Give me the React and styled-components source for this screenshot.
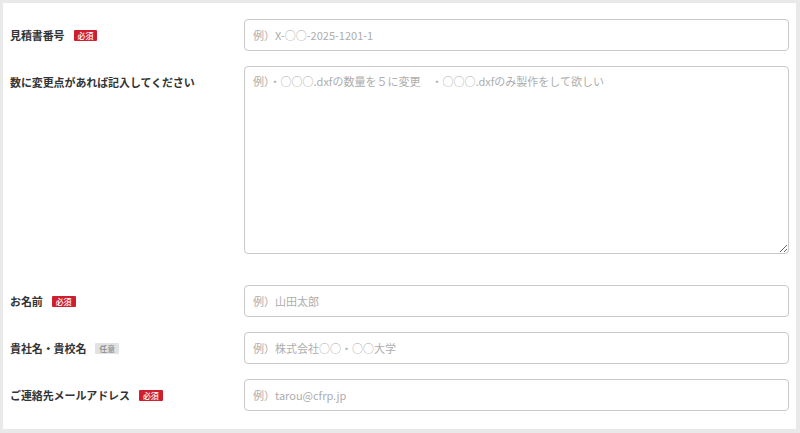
import React from "react";
import styled, { createGlobalStyle } from "styled-components";

const Global = createGlobalStyle`
  html, body { margin: 0; padding: 0; background: #e9e9e9; }
  body { font-family: "Noto Sans CJK JP", "Noto Sans", sans-serif; }
  * { box-sizing: border-box; }
`;

const Page = styled.div`
  padding: 3px 4px 4px 3px;
  width: 800px;
  height: 433px;
`;

const Panel = styled.form`
  background: #fff;
  width: 793px;
  height: 426px;
  padding: 16px 7px 0 7px;
  display: flex;
  flex-direction: column;
`;

const Row = styled.div`
  display: grid;
  grid-template-columns: 234px 1fr;
  align-items: start;
  margin-bottom: ${(p) => p.$gap || 15}px;
`;

const Label = styled.label`
  display: flex;
  align-items: center;
  gap: 9px;
  padding-top: 8px;
  line-height: 16px;
  font-size: 11px;
  font-weight: 700;
  color: #333;
  letter-spacing: -0.1px;
`;

const Badge = styled.span`
  display: inline-block;
  height: 11px;
  line-height: 11px;
  padding: 0 4px;
  font-size: 8px;
  font-weight: 500;
  color: ${(p) => (p.$optional ? "#8a8a8a" : "#fff")};
  background: ${(p) => (p.$optional ? "#e2e2e2" : "#cf1f2e")};
  border-radius: 1px;
`;

const fieldBase = `
  display: block;
  width: 545px;
  margin: 0;
  border: 1px solid #c9c9c9;
  border-radius: 4px;
  background: #fff;
  font-family: "Noto Sans CJK JP", "Noto Sans", sans-serif;
  font-size: 11px;
  color: #333;
  outline: none;
  &::placeholder { color: #adadad; }
`;

const Input = styled.input`
  ${fieldBase}
  height: 32px;
  padding: 0 8px;
`;

const TextArea = styled.textarea`
  ${fieldBase}
  height: 188px;
  padding: 6px 8px;
  line-height: 16px;
  resize: vertical;
`;

const fields = [
  { label: "見積書番号", badge: "必須", ph: "例）X-○○-2025-1201-1" },
  {
    label: "数に変更点があれば記入してください",
    ph: "例）・○○○.dxfの数量を５に変更　・○○○.dxfのみ製作をして欲しい",
    area: true,
    gap: 31,
  },
  { label: "お名前", badge: "必須", ph: "例）山田太郎" },
  { label: "貴社名・貴校名", badge: "任意", optional: true, ph: "例）株式会社○○・○○大学" },
  { label: "ご連絡先メールアドレス", badge: "必須", ph: "例）tarou@cfrp.jp" },
];

export default function App() {
  return (
    <>
      <Global />
      <Page>
        <Panel onSubmit={(e) => e.preventDefault()}>
          {fields.map((f, i) => (
            <Row key={i} $gap={f.gap}>
              <Label>
                {f.label}
                {f.badge && <Badge $optional={f.optional}>{f.badge}</Badge>}
              </Label>
              {f.area ? <TextArea placeholder={f.ph} /> : <Input placeholder={f.ph} />}
            </Row>
          ))}
        </Panel>
      </Page>
    </>
  );
}
